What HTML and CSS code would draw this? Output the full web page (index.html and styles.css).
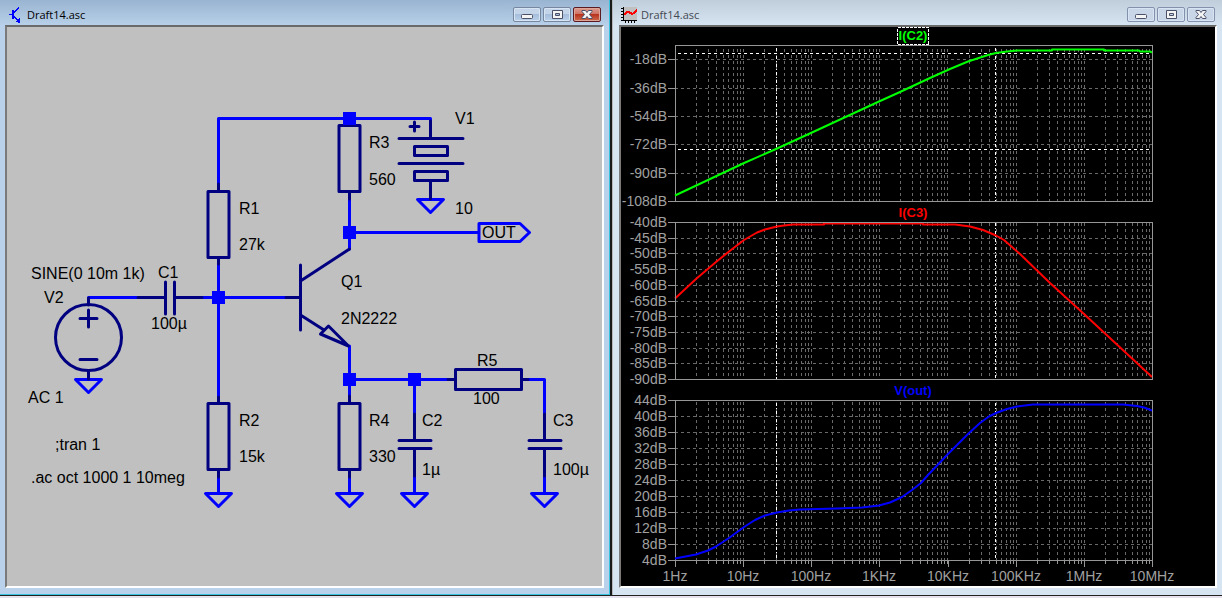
FILE: index.html
```html
<!DOCTYPE html>
<html lang="en">

<head>
    <meta charset="UTF-8">
    <meta name="viewport" content="width=device-width, initial-scale=1.0">
    <title>Draft14.asc</title>
    <link rel="stylesheet" href="styles.css">
</head>

<body>
    <main class="workspace">
        <section class="window window-active">
            <header class="titlebar">
                <svg class="title-icon" viewBox="0 0 16 16" aria-hidden="true">
                    <path d="M0 7.500H4M5 5.500L10 0.500M5 9.500L10 14.500" fill="none" stroke="#00f" />
                    <path d="M3 3h2v9H3zM11 11v5H9v-1H7v-1h2v-2z" fill="#00f" />
                </svg>
                <h1 class="title">Draft14.asc</h1>
                <div class="controls">
                    <button type="button" aria-label="Minimize">
                        <svg viewBox="0 0 26 13"><rect x="7.500" y="6.500" width="11" height="4" rx="1" /></svg>
                    </button>
                    <button type="button" aria-label="Restore">
                        <svg viewBox="0 0 26 13"><path d="M8.500 2.500h10v8h-10zM11.500 5.500h4v2h-4z" fill-rule="evenodd" /></svg>
                    </button>
                    <button type="button" class="close" aria-label="Close">
                        <svg viewBox="0 0 26 13"><path d="M8 2.500h3.500L13 4.500l1.500-2H18v1L15.500 6.500 18 9.500v1h-3.500L13 8.500l-1.500 2H8v-1l2.500-3L8 3.500z" /></svg>
                    </button>
                </div>
            </header>
            <div class="client">
                <svg class="schematic" viewBox="7 27 595 559" preserveAspectRatio="xMinYMin meet">
                    <defs>
                        <path id="ground" d="M-13 0H13L0 13Z" />
                        <rect id="node" x="-6.500" y="-6.500" width="13" height="13" />
                        <rect id="resistor" x="-10.500" y="0" width="21" height="66" />
                    </defs>

                    <g class="wire">
                        <path d="M218.500 184V118.500H430.500V122" />
                        <path d="M218.500 264V398M88.500 297.500H138M202 297.500H286" />
                        <path d="M349.500 198V249M349.500 232.500H478.500" />
                        <path d="M349.500 346V396M349.500 379.500H448M414.500 379.500V414M528 379.500H544.500V414" />
                        <path d="M218.500 476V492M349.500 476V492M414.500 476V492M544.500 476V492" />
                        <path d="M479 223.500H520L529.500 232.500L520 241.500H479Z" />
                        <use href="#ground" x="430.500" y="199.500" />
                        <use href="#ground" x="88.500" y="379.500" />
                        <use href="#ground" x="218.500" y="493.500" />
                        <use href="#ground" x="349.500" y="493.500" />
                        <use href="#ground" x="414.500" y="493.500" />
                        <use href="#ground" x="544.500" y="493.500" />
                    </g>

                    <g class="part">
                        <!-- resistors -->
                        <use href="#resistor" x="218.500" y="191.500" />
                        <use href="#resistor" x="218.500" y="403.500" />
                        <use href="#resistor" x="349.500" y="125.500" />
                        <use href="#resistor" x="349.500" y="403.500" />
                        <rect x="455.500" y="369.500" width="66" height="20" />
                        <path d="M218.500 184V191M218.500 258V264M218.500 397V403M218.500 470V477M349.500 192V199M349.500 396V403M349.500 470V477M448 379.500H455M522 379.500H528" />
                        <!-- capacitors -->
                        <path d="M138 297.500H165M175 297.500H202M165.500 282V314M174.500 282V314" />
                        <path d="M414.500 414V440M414.500 449V476M399 440.500H431M399 448.500H431" />
                        <path d="M544.500 414V440M544.500 449V476M529 440.500H561M529 448.500H561" />
                        <!-- transistor -->
                        <path d="M286 297.500H300M300.500 265V330M300.500 281L349.500 249M300.500 315L324 330" />
                        <path d="M320.500 334L328.500 326L348.500 346Z" />
                        <!-- battery -->
                        <path d="M430.500 121V138M399 138.500H463M399 163.500H463M430.500 181V199M410 126.500H419M414.500 122V131" />
                        <rect x="414.500" y="146.500" width="33" height="9" />
                        <rect x="414.500" y="171.500" width="33" height="9" />
                        <!-- signal source -->
                        <circle cx="88.500" cy="337.500" r="33" />
                        <path d="M88.500 298V305M88.500 371V379M80 318.500H97M88.500 310V327M80 359.500H97" />
                    </g>

                    <g class="nodes">
                        <use href="#node" x="349.500" y="118.500" />
                        <use href="#node" x="349.500" y="232.500" />
                        <use href="#node" x="218.500" y="297.500" />
                        <use href="#node" x="349.500" y="379.500" />
                        <use href="#node" x="414.500" y="379.500" />
                    </g>

                    <g class="part-text">
                        <text x="455" y="124">V1</text>
                        <text x="455" y="214">10</text>
                        <text x="369" y="148">R3</text>
                        <text x="369" y="185">560</text>
                        <text x="482" y="238">OUT</text>
                        <text x="239" y="214">R1</text>
                        <text x="239" y="250">27k</text>
                        <text x="341" y="287">Q1</text>
                        <text x="341" y="324">2N2222</text>
                        <text x="31" y="279">SINE(0 10m 1k)</text>
                        <text x="158" y="278">C1</text>
                        <text x="44" y="303">V2</text>
                        <text x="151" y="329">100µ</text>
                        <text x="28" y="403">AC 1</text>
                        <text x="55" y="450">;tran 1</text>
                        <text x="31" y="483">.ac oct 1000 1 10meg</text>
                        <text x="239" y="426">R2</text>
                        <text x="239" y="462">15k</text>
                        <text x="369" y="426">R4</text>
                        <text x="369" y="462">330</text>
                        <text x="422" y="426">C2</text>
                        <text x="422" y="475">1µ</text>
                        <text x="477" y="366">R5</text>
                        <text x="473" y="404">100</text>
                        <text x="553" y="426">C3</text>
                        <text x="553" y="475">100µ</text>
                    </g>
                </svg>
            </div>
        </section>

        <section class="window">
            <header class="titlebar">
                <svg class="title-icon" viewBox="0 0 16 16" aria-hidden="true">
                    <rect x="2" width="14" height="14" fill="#c0c0c0" />
                    <path d="M2.500 0V14M2 13.500H16M0 1.500H2M0 4.500H2M0 7.500H2M0 10.500H2M0 13.500H2M4.500 14V16M7.500 14V16M10.500 14V16M13.500 14V16" fill="none" stroke="#000" />
                    <path d="M3 8L6 5H8L11 7L13 6L16 3" fill="none" stroke="#f00" stroke-width="2" />
                </svg>
                <h2 class="title">Draft14.asc</h2>
                <div class="controls">
                    <button type="button" aria-label="Minimize">
                        <svg viewBox="0 0 26 13"><rect x="7.500" y="6.500" width="11" height="4" rx="1" /></svg>
                    </button>
                    <button type="button" aria-label="Restore">
                        <svg viewBox="0 0 26 13"><path d="M8.500 2.500h10v8h-10zM11.500 5.500h4v2h-4z" fill-rule="evenodd" /></svg>
                    </button>
                    <button type="button" aria-label="Close">
                        <svg viewBox="0 0 26 13"><path d="M8 2.500h3.500L13 4.500l1.500-2H18v1L15.500 6.500 18 9.500v1h-3.500L13 8.500l-1.500 2H8v-1l2.500-3L8 3.500z" /></svg>
                    </button>
                </div>
            </header>
            <div class="client client-plot">
                <svg class="plot" viewBox="621 27 594 559" preserveAspectRatio="xMinYMin meet">
                    <defs>
                        <!-- one decade of log grid lines -->
                        <path id="decade" d="M21.500 0V160M33.500 0V160M41.500 0V160M48.500 0V160M53.500 0V160M58.500 0V160M62.500 0V160M65.500 0V160M68.500 0V160" />
                        <g id="decades">
                            <use href="#decade" x="0" />
                            <use href="#decade" x="68" />
                            <use href="#decade" x="136" />
                            <use href="#decade" x="204" />
                            <use href="#decade" x="273" />
                            <use href="#decade" x="341" />
                            <use href="#decade" x="409" />
                        </g>
                    </defs>

                    <!-- I(C2) -->
                    <g class="grid">
                        <svg x="675" y="49" width="477" height="152"><use href="#decades" /></svg>
                        <path d="M675 59.500H1152M675 88.500H1152M675 116.500H1152M675 144.500H1152M675 173.500H1152" />
                    </g>
                    <g class="axis">
                        <rect x="675.500" y="45.500" width="477" height="156" />
                        <path d="M668 59.500H675M668 88.500H675M668 116.500H675M668 144.500H675M668 173.500H675M668 201.500H675" />
                    </g>
                    <path class="cursor" d="M678 53.500H1152M678 149.500H1152" />
                    <path class="cursor cursor-v" d="M776.500 48V201M995.500 48V201" />
                    <path class="trace trace-green" d="M675 195.500L743 163.500L776 149L812 132.500L879 101.500L900 92L930 78L950 69L968 61.500L988 55L996 53L1007 51.500L1017 50.500H1052V49.500H1104V50.500H1139L1140 51.500H1150L1152 52.500" />

                    <!-- I(C3) -->
                    <g class="grid">
                        <svg x="675" y="223" width="477" height="156"><use href="#decades" /></svg>
                        <path d="M675 238.500H1152M675 253.500H1152M675 269.500H1152M675 285.500H1152M675 301.500H1152M675 316.500H1152M675 332.500H1152M675 348.500H1152M675 363.500H1152" />
                    </g>
                    <path class="cursor cursor-v" d="M776.500 225V379M995.500 223V379" />
                    <path class="trace trace-red" d="M675 298.500L696 279L716 262L729 251.500L744 240L757 232.500L765 229.500L777 226.500L784 225.500L793 224.500H824V223.500H923V224.500H955L970 226.500L983 230L996 235.500L1004 240L1020 254L1050 283L1084 314L1152 377" />
                    <g class="axis">
                        <rect x="675.500" y="222.500" width="477" height="157" />
                        <path d="M668 222.500H675M668 238.500H675M668 253.500H675M668 269.500H675M668 285.500H675M668 301.500H675M668 316.500H675M668 332.500H675M668 348.500H675M668 363.500H675M668 379.500H675" />
                    </g>

                    <!-- V(out) -->
                    <g class="grid">
                        <svg x="675" y="402" width="477" height="158"><use href="#decades" /></svg>
                        <path d="M675 416.500H1152M675 432.500H1152M675 448.500H1152M675 464.500H1152M675 480.500H1152M675 496.500H1152M675 512.500H1152M675 528.500H1152M675 544.500H1152" />
                    </g>
                    <g class="axis">
                        <rect x="675.500" y="400.500" width="477" height="160" />
                        <path d="M668 400.500H675M668 416.500H675M668 432.500H675M668 448.500H675M668 464.500H675M668 480.500H675M668 496.500H675M668 512.500H675M668 528.500H675M668 544.500H675M668 560.500H675" />
                        <svg x="675" y="560" width="478" height="4"><use href="#decades" /></svg>
                        <path d="M675.500 560V567M743.500 560V567M811.500 560V567M879.500 560V567M948.500 560V567M1016.500 560V567M1084.500 560V567M1152.500 560V567" />
                    </g>
                    <path class="cursor cursor-v" d="M776.500 403V560M995.500 403V560" />
                    <path class="trace trace-blue" d="M675 558.500L696 554.500L708 550.500L716 546.500L729 538L744 527L755 520L765 515.500L777 512.500L789 510.500L800 509.500L837 508.500L862 507.500L879 505.500L890 502.500L902 497L912 490L921 483L928 475L948 454L968 434L980 423L989 416.500L996 413L1007 409L1017 406.500L1033 404.500H1123L1137 406L1144 407.500L1152 410.500" />

                    <g class="y-labels">
                        <text x="667" y="64">-18dB</text>
                        <text x="667" y="93">-36dB</text>
                        <text x="667" y="121">-54dB</text>
                        <text x="667" y="149">-72dB</text>
                        <text x="667" y="178">-90dB</text>
                        <text x="667" y="206">-108dB</text>
                        <text x="667" y="227">-40dB</text>
                        <text x="667" y="243">-45dB</text>
                        <text x="667" y="258">-50dB</text>
                        <text x="667" y="274">-55dB</text>
                        <text x="667" y="290">-60dB</text>
                        <text x="667" y="306">-65dB</text>
                        <text x="667" y="321">-70dB</text>
                        <text x="667" y="337">-75dB</text>
                        <text x="667" y="353">-80dB</text>
                        <text x="667" y="368">-85dB</text>
                        <text x="667" y="384">-90dB</text>
                        <text x="667" y="405">44dB</text>
                        <text x="667" y="421">40dB</text>
                        <text x="667" y="437">36dB</text>
                        <text x="667" y="453">32dB</text>
                        <text x="667" y="469">28dB</text>
                        <text x="667" y="485">24dB</text>
                        <text x="667" y="501">20dB</text>
                        <text x="667" y="517">16dB</text>
                        <text x="667" y="533">12dB</text>
                        <text x="667" y="549">8dB</text>
                        <text x="667" y="565">4dB</text>
                    </g>
                    <g class="x-labels">
                        <text x="675" y="581">1Hz</text>
                        <text x="743" y="581">10Hz</text>
                        <text x="811" y="581">100Hz</text>
                        <text x="879" y="581">1KHz</text>
                        <text x="948" y="581">10KHz</text>
                        <text x="1016" y="581">100KHz</text>
                        <text x="1084" y="581">1MHz</text>
                        <text x="1152" y="581">10MHz</text>
                    </g>
                    <g class="trace-names">
                        <rect x="897.500" y="27.500" width="31" height="17" />
                        <text class="name-green" x="913" y="40">I(C2)</text>
                        <text class="name-red" x="913" y="217">I(C3)</text>
                        <text class="name-blue" x="913" y="395">V(out)</text>
                    </g>
                </svg>
            </div>
        </section>
    </main>
</body>

</html>
```

FILE: styles.css
```css
* {
    margin: 0;
    padding: 0;
    box-sizing: border-box;
}

body {
    height: 100vh;
    padding-bottom: 2px;
    background: #e6e3ee;
    font-family: "Open Sans", "Noto Sans", sans-serif;
    overflow: hidden;
}

.workspace {
    display: grid;
    grid-template-columns: repeat(2, minmax(0, 1fr));
    gap: 2px;
    height: 100%;
    background: #1a1a1a;
    border-bottom: 1px solid #222;
}

.window {
    display: flex;
    flex-direction: column;
    padding: 0 5px 7px 6px;
    border-left: 1px solid #b4b8bd;
    background: linear-gradient(180deg, #c0cdda 0, #d7e4f2 26px);
}

.window-active {
    padding: 0 5px 6px 5px;
    border: 0;
    border-right: 1px solid #38c3dc;
    border-bottom: 1px solid #38c3dc;
    background: linear-gradient(180deg, #99b4d1 0, #b9d1ea 26px);
}

.titlebar {
    display: flex;
    align-items: center;
    gap: 2px;
    height: 25px;
    padding: 4px 3px 0 4px;
    flex: none;
}

.window:not(.window-active) .titlebar {
    gap: 4px;
    padding: 4px 2px 0 2px;
}

.title-icon {
    width: 16px;
    height: 16px;
    shape-rendering: crispEdges;
}

.title {
    flex: 1;
    font-size: 11px;
    font-weight: 400;
    line-height: 16px;
    color: #000;
}

.window:not(.window-active) .title {
    color: #444a52;
}

.controls {
    display: flex;
    gap: 2px;
}

.controls button {
    display: block;
    width: 28px;
    height: 15px;
    border: 1px solid #76879f;
    border-radius: 2px;
    background: linear-gradient(180deg, #c4d5e9 0, #c4d5e9 50%, #a6bedb 50%, #b9d1ea 100%);
    box-shadow: inset 0 0 0 1px #d6e4f3;
}

.window:not(.window-active) button {
    border-color: #8491ac;
    background: #c8d6e7;
}

.controls .close {
    border-color: #5a1a20;
    background: linear-gradient(180deg, #dc9c90 0, #cf7364 45%, #b8341f 50%, #cc6a4d 100%);
    box-shadow: inset 0 0 0 1px #dda498;
}

.controls svg {
    display: block;
    width: 26px;
    height: 13px;
    fill: #f4f4f4;
    stroke: #4b5068;
}

.client {
    flex: 1;
    min-height: 0;
    border: 2px solid;
    border-color: #6a6a6a #fff #fff #7a7a7a;
    background: #c0c0c0;
}

.client-plot {
    background: #000;
}

.schematic,
.plot {
    display: block;
    width: 100%;
    height: 100%;
}

/* schematic */
.wire,
.part {
    fill: none;
    stroke-width: 3;
    stroke-linejoin: round;
    stroke-linecap: round;
}

.wire {
    stroke: #00f;
}

.part {
    stroke: #000080;
}

.nodes {
    fill: #00f;
}

.part-text {
    font-family: "Liberation Sans", Arial, sans-serif;
    font-size: 16px;
    fill: #000;
}

/* waveforms */
.plot path,
.plot rect {
    fill: none;
    shape-rendering: crispEdges;
}

.grid {
    stroke: #696969;
    stroke-dasharray: 3 3;
}

.axis {
    stroke: #969696;
}

.cursor {
    stroke: #fff;
    stroke-dasharray: 3 3;
}

.cursor-v {
    stroke-dasharray: 3 2 1 2;
}

.plot .trace {
    stroke-width: 2;
    stroke-linejoin: round;
    shape-rendering: geometricPrecision;
}

.trace-green {
    stroke: #0f0;
}

.trace-red {
    stroke: #f00;
}

.trace-blue {
    stroke: #00f;
}

.y-labels,
.x-labels,
.trace-names {
    font-family: "Liberation Sans", Arial, sans-serif;
    font-size: 14px;
    fill: #a0a0a0;
}

.y-labels {
    text-anchor: end;
}

.x-labels,
.trace-names {
    text-anchor: middle;
}

.trace-names {
    font-size: 13px;
    font-weight: 700;
}

.trace-names rect {
    stroke: #fff;
    stroke-dasharray: 3 1;
}

.name-green {
    fill: #0f0;
}

.name-red {
    fill: #f00;
}

.name-blue {
    fill: #00f;
}
```
